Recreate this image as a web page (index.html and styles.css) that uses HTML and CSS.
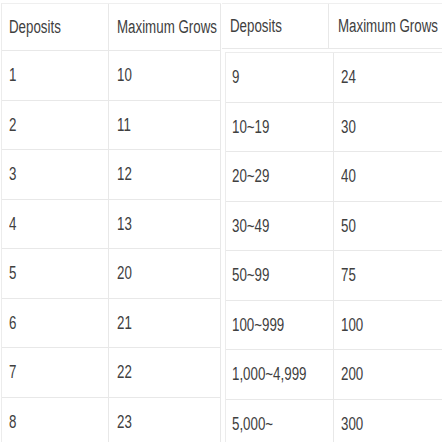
FILE: index.html
```html
<!DOCTYPE html>
<html>
<head>
<meta charset="utf-8">
<link rel="stylesheet" href="styles.css">
</head>
<body>
<div class="page">
  <div class="tbl tbl-left">
    <div class="row head">
      <div class="cell c1"><span class="t">Deposits</span></div>
      <div class="cell c2"><span class="t">Maximum Grows</span></div>
    </div>
    <div class="row"><div class="cell c1"><span class="t">1</span></div><div class="cell c2"><span class="t">10</span></div></div>
    <div class="row"><div class="cell c1"><span class="t">2</span></div><div class="cell c2"><span class="t">11</span></div></div>
    <div class="row"><div class="cell c1"><span class="t">3</span></div><div class="cell c2"><span class="t">12</span></div></div>
    <div class="row"><div class="cell c1"><span class="t">4</span></div><div class="cell c2"><span class="t">13</span></div></div>
    <div class="row"><div class="cell c1"><span class="t">5</span></div><div class="cell c2"><span class="t">20</span></div></div>
    <div class="row"><div class="cell c1"><span class="t">6</span></div><div class="cell c2"><span class="t">21</span></div></div>
    <div class="row"><div class="cell c1"><span class="t">7</span></div><div class="cell c2"><span class="t">22</span></div></div>
    <div class="row"><div class="cell c1"><span class="t">8</span></div><div class="cell c2"><span class="t">23</span></div></div>
  </div>
  <div class="tbl-right">
    <div class="row head rhead">
      <div class="cell r1h"><span class="t">Deposits</span></div>
      <div class="cell r2h"><span class="t">Maximum Grows</span></div>
    </div>
    <div class="rbody">
      <div class="row"><div class="cell r1"><span class="t">9</span></div><div class="cell r2"><span class="t">24</span></div></div>
      <div class="row"><div class="cell r1"><span class="t">10~19</span></div><div class="cell r2"><span class="t">30</span></div></div>
      <div class="row"><div class="cell r1"><span class="t">20~29</span></div><div class="cell r2"><span class="t">40</span></div></div>
      <div class="row"><div class="cell r1"><span class="t">30~49</span></div><div class="cell r2"><span class="t">50</span></div></div>
      <div class="row"><div class="cell r1"><span class="t">50~99</span></div><div class="cell r2"><span class="t">75</span></div></div>
      <div class="row"><div class="cell r1"><span class="t">100~999</span></div><div class="cell r2"><span class="t">100</span></div></div>
      <div class="row"><div class="cell r1"><span class="t">1,000~4,999</span></div><div class="cell r2"><span class="t">200</span></div></div>
      <div class="row"><div class="cell r1"><span class="t">5,000~</span></div><div class="cell r2"><span class="t">300</span></div></div>
    </div>
  </div>
</div>
</body>
</html>
```

FILE: styles.css
```css
html, body {
  margin: 0;
  padding: 0;
  background: #ffffff;
  overflow: hidden;
}
body {
  width: 442px;
  height: 442px;
  font-family: "Liberation Sans", Arial, sans-serif;
  font-size: 18px;
  color: #404040;
}
.page {
  display: flex;
  padding-top: 3px;
}
.row {
  display: flex;
}
.cell {
  box-sizing: border-box;
  display: flex;
  align-items: center;
  border-right: 1px solid #e8e8e8;
  border-bottom: 1px solid #e8e8e8;
  height: 49.5px;
  white-space: nowrap;
  overflow: hidden;
  padding-top: 1px;
}
.t {
  display: inline-block;
  transform: scaleX(0.74);
  transform-origin: left center;
}
.head .cell {
  height: 47px;
}
.tbl-left {
  margin-left: 1px;
  border-left: 1px solid #ececec;
  border-top: 1px solid #efefef;
}
.c1 { width: 107px; padding-left: 7px; }
.c2 { width: 112px; padding-left: 8px; }

.tbl-right {
  margin-left: 1px;
}
.rhead {
  border-top: 1px solid #efefef;
}
.rhead .cell { height: 45px; }
.r1h { width: 107px; padding-left: 8px; }
.r2h { width: 114px; padding-left: 9px; border-right: 1px solid #ececec; }
.rbody {
  margin-left: 3px;
  margin-top: 3px;
  border-left: 1px solid #ececec;
  border-top: 1px solid #ececec;
}
.r1 { width: 108px; padding-left: 6px; }
.r2 { width: 110px; padding-left: 7px; }
```
